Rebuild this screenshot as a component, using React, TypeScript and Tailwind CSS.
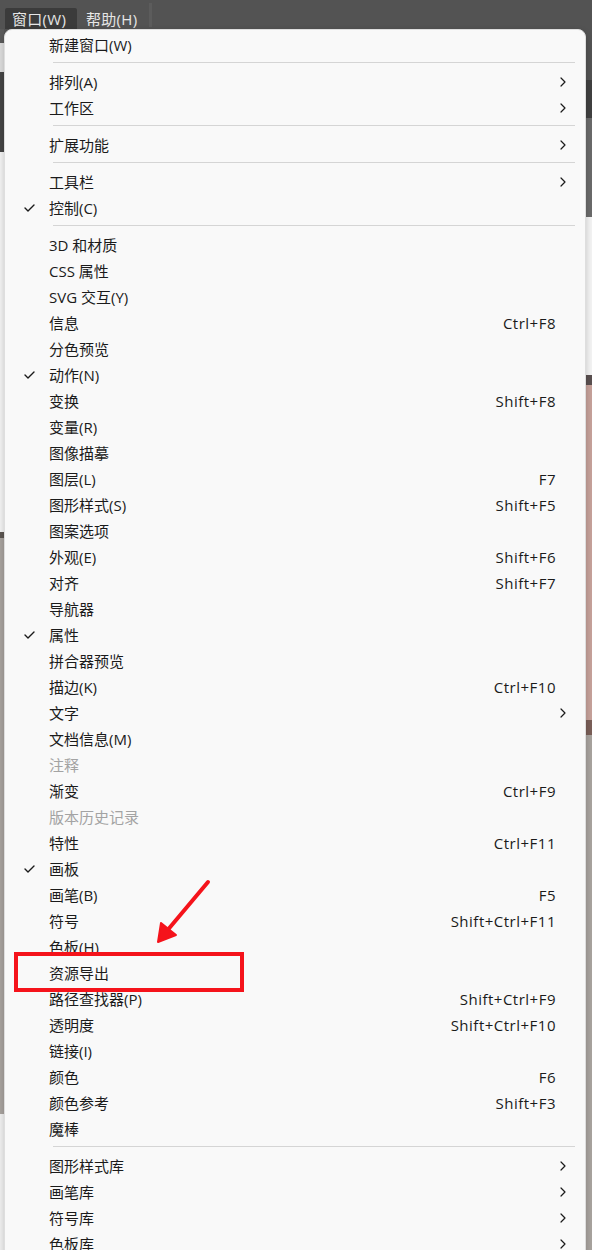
import React from 'react';

type MenuEntry =
  | { sep: true }
  | { label: string; shortcut?: string; sub?: boolean; checked?: boolean; disabled?: boolean };

const entries: MenuEntry[] = [
  { label: '新建窗口(W)' },
  { sep: true },
  { label: '排列(A)', sub: true },
  { label: '工作区', sub: true },
  { sep: true },
  { label: '扩展功能', sub: true },
  { sep: true },
  { label: '工具栏', sub: true },
  { label: '控制(C)', checked: true },
  { sep: true },
  { label: '3D 和材质' },
  { label: 'CSS 属性' },
  { label: 'SVG 交互(Y)' },
  { label: '信息', shortcut: 'Ctrl+F8' },
  { label: '分色预览' },
  { label: '动作(N)', checked: true },
  { label: '变换', shortcut: 'Shift+F8' },
  { label: '变量(R)' },
  { label: '图像描摹' },
  { label: '图层(L)', shortcut: 'F7' },
  { label: '图形样式(S)', shortcut: 'Shift+F5' },
  { label: '图案选项' },
  { label: '外观(E)', shortcut: 'Shift+F6' },
  { label: '对齐', shortcut: 'Shift+F7' },
  { label: '导航器' },
  { label: '属性', checked: true },
  { label: '拼合器预览' },
  { label: '描边(K)', shortcut: 'Ctrl+F10' },
  { label: '文字', sub: true },
  { label: '文档信息(M)' },
  { label: '注释', disabled: true },
  { label: '渐变', shortcut: 'Ctrl+F9' },
  { label: '版本历史记录', disabled: true },
  { label: '特性', shortcut: 'Ctrl+F11' },
  { label: '画板', checked: true },
  { label: '画笔(B)', shortcut: 'F5' },
  { label: '符号', shortcut: 'Shift+Ctrl+F11' },
  { label: '色板(H)' },
  { label: '资源导出' },
  { label: '路径查找器(P)', shortcut: 'Shift+Ctrl+F9' },
  { label: '透明度', shortcut: 'Shift+Ctrl+F10' },
  { label: '链接(I)' },
  { label: '颜色', shortcut: 'F6' },
  { label: '颜色参考', shortcut: 'Shift+F3' },
  { label: '魔棒' },
  { sep: true },
  { label: '图形样式库', sub: true },
  { label: '画笔库', sub: true },
  { label: '符号库', sub: true },
  { label: '色板库', sub: true },
];

const CheckMark = () => (
  <svg width="11" height="8" viewBox="0 0 11 8" fill="none">
    <path d="M1 4L4 7L10 1" stroke="#1b1b1b" strokeWidth="1.4" strokeLinecap="round" strokeLinejoin="round" />
  </svg>
);

const Chevron = () => (
  <svg width="6" height="10" viewBox="0 0 6 10" fill="none">
    <path d="M1 1L5 5L1 9" stroke="#1b1b1b" strokeWidth="1.2" strokeLinecap="round" strokeLinejoin="round" />
  </svg>
);

const MenuRow: React.FC<{ entry: Exclude<MenuEntry, { sep: true }> }> = ({ entry }) => (
  <div className={`flex h-[26px] items-center ${entry.disabled ? 'text-[#a3a3a3]' : 'text-[#1b1b1b]'}`}>
    <div className="flex w-[44px] justify-center pl-[4px]">{entry.checked && <CheckMark />}</div>
    <span className="flex-1 whitespace-nowrap">{entry.label}</span>
    {entry.shortcut && <span className="mr-[29px] whitespace-nowrap tracking-[0.5px]">{entry.shortcut}</span>}
    {entry.sub && (
      <span className="mr-[19px] flex items-center">
        <Chevron />
      </span>
    )}
  </div>
);

export default function App() {
  return (
    <div
      className="relative h-[1250px] w-[592px] overflow-hidden bg-[#535353] text-[15px] leading-[20px]"
      style={{ fontFamily: '"Open Sans", "Noto Sans CJK SC", sans-serif' }}
    >
      {/* app menu bar */}
      <div className="flex h-[29px] items-end bg-[#535353] pl-[5px] text-[#e6e6e6]">
        <div className="flex h-[21px] w-[72px] items-center rounded-t-[2px] bg-[#3b3b3b] pl-[7px] tracking-[0.3px]">窗口(W)</div>
        <div className="flex h-[21px] items-center pl-[9px] tracking-[0.3px]">帮助(H)</div>
        <div className="mb-[2px] ml-[12px] h-[24px] w-[3px] bg-[#5c5c5c]" />
      </div>

      {/* workspace behind the menu */}
      <div className="flex h-[1221px] justify-between">
        <div className="flex w-[4px] flex-col">
          <div className="h-[14px] bg-[#5a5a5a]" />
          <div className="h-[29px] bg-[#dcdcdc]" />
          <div className="h-[80px] bg-[#454545]" />
          <div className="h-[380px] bg-[#f3f3f3]" />
          <div className="h-[6px] bg-[#5c5652]" />
          <div className="h-[576px] bg-[#a8a39e]" />
          <div className="flex-1 bg-[#f0f0f0]" />
        </div>
        <div className="flex w-[6px] flex-col">
          <div className="h-[51px] bg-[#535353]" />
          <div className="h-[38px] bg-[#404040]" />
          <div className="h-[99px] bg-[#6a6a6a]" />
          <div className="h-[158px] bg-[#f3f3f3]" />
          <div className="h-[10px] bg-[#5a5050]" />
          <div className="h-[335px] bg-[#c6a19a]" />
          <div className="h-[15px] bg-[#7a5f58]" />
          <div className="flex-1 bg-[#a8a39e]" />
        </div>
      </div>

      {/* dropdown */}
      <div className="absolute left-[4px] top-[29px] w-[582px] rounded-t-[8px] border border-[#dedede] bg-[#f9f9f9] pt-[2px] pb-[4px] shadow-[0_2px_6px_rgba(0,0,0,0.2)]">
        {entries.map((entry, i) =>
          'sep' in entry ? (
            <div key={i} className="ml-[48px] mr-[10px] mt-[4px] mb-[6px] h-px bg-[#d5d5d5]" />
          ) : (
            <MenuRow key={i} entry={entry} />
          )
        )}
      </div>

      {/* annotation */}
      <div className="absolute left-[14px] top-[952px] h-[40px] w-[230px] border-4 border-[#f5131b]" />
      <svg className="absolute left-[150px] top-[876px]" width="66" height="72" viewBox="0 0 66 72" fill="none">
        <path d="M58 6L16 56" stroke="#f5131b" strokeWidth="4" strokeLinecap="round" />
        <path d="M8 66L11 47L26 59Z" fill="#f5131b" stroke="#f5131b" strokeWidth="2" strokeLinejoin="round" />
      </svg>
    </div>
  );
}
